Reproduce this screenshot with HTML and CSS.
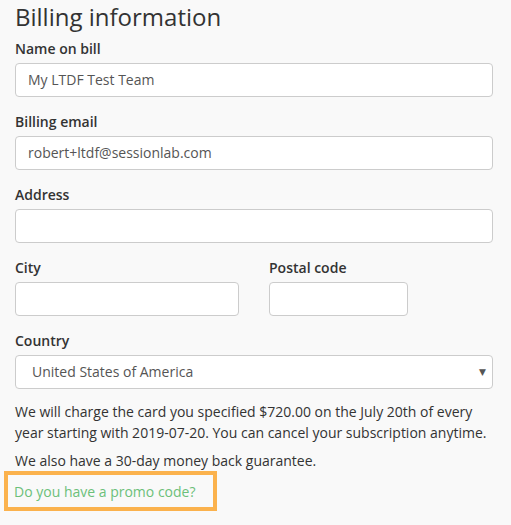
FILE: index.html
```html
<!DOCTYPE html>
<html>
<head>
<meta charset="utf-8">
<link rel="stylesheet" href="styles.css">
</head>
<body>
<div class="page">
  <h2 class="title">Billing information</h2>
  <div class="field">
    <label class="label">Name on bill</label>
    <div class="input">My LTDF Test Team</div>
  </div>
  <div class="field">
    <label class="label">Billing email</label>
    <div class="input">robert+ltdf@sessionlab.com</div>
  </div>
  <div class="field">
    <label class="label">Address</label>
    <div class="input"></div>
  </div>
  <div class="row">
    <div class="field city">
      <label class="label">City</label>
      <div class="input"></div>
    </div>
    <div class="field postal">
      <label class="label">Postal code</label>
      <div class="input"></div>
    </div>
  </div>
  <div class="field">
    <label class="label">Country</label>
    <div class="input select"><span>United States of America</span><span class="caret">▼</span></div>
  </div>
  <p class="text">We will charge the card you specified $720.00 on the July 20th of every year starting with 2019-07-20. You can cancel your subscription anytime.</p>
  <p class="text second">We also have a 30-day money back guarantee.</p>
  <div class="promo"><a class="promo-link">Do you have a promo code?</a></div>
</div>
</body>
</html>
```
FILE: styles.css
```css
html, body {
  margin: 0;
  padding: 0;
  background: #f9f9f9;
}
body {
  font-family: "Open Sans", "DejaVu Sans", sans-serif;
  color: #333;
  font-size: 14px;
}
.page {
  width: 478px;
  padding: 0 18px 0 15px;
}
.title {
  margin: 0;
  padding-top: 2px;
  font-size: 24px;
  font-weight: 400;
  line-height: 30px;
  color: #333;
}
.field {
  display: flex;
  flex-direction: column;
  margin-bottom: 8px;
}
.label {
  font-weight: 600;
  font-size: 14px;
  line-height: 20px;
  margin: 7px 0 4px;
}
.input {
  box-sizing: border-box;
  height: 34px;
  background: #fff;
  border: 1px solid #ccc;
  border-radius: 4px;
  padding: 0 12px;
  font-size: 14px;
  line-height: 32px;
  color: #555;
}
.row {
  display: flex;
  gap: 30px;
}
.city { width: 224px; }
.postal { width: 139px; }
.select {
  display: flex;
  justify-content: space-between;
  padding-left: 16px;
  padding-right: 6px;
}
.caret {
  font-size: 9px;
  color: #555;
}
.text {
  margin: 12px 0 7px;
  line-height: 21px;
  font-size: 14px;
}
.text.second { margin-top: 0; margin-bottom: 0; }
.promo {
  margin-left: -11px;
  width: 199px;
  height: 32px;
  border: 4px solid #fbb24d;
  padding-left: 6px;
  display: flex;
  align-items: center;
}
.promo-link {
  color: #6cc07a;
  font-size: 14px;
}
```
